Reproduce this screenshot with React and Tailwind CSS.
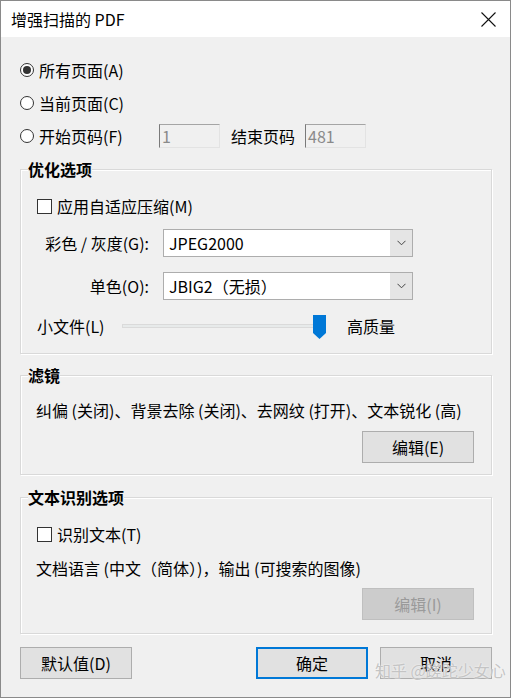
import React from 'react';

const font = { fontFamily: '"Noto Sans CJK SC", "Noto Sans", sans-serif' };

const Radio = ({ checked, label }) => (
  <div className="flex items-center">
    <div className="w-[14px] h-[14px] rounded-full border border-[#333] bg-white flex items-center justify-center">
      {checked && <div className="w-[8px] h-[8px] rounded-full bg-[#333]" />}
    </div>
    <span className="ml-[5px]">{label}</span>
  </div>
);

const Checkbox = ({ label }) => (
  <div className="flex items-center h-[24px]">
    <div className="w-[15px] h-[15px] border border-[#333] bg-white" />
    <span className="ml-[5px]">{label}</span>
  </div>
);

const PageInput = ({ value }) => (
  <div className="w-[61px] h-[24px] border border-t-[#a5a5a5] border-l-[#7a7a7a] border-r-[#e3e3e3] border-b-[#e3e3e3] bg-[#f0f0f0] text-[#8a8a8a] pl-[2px] flex items-center">
    {value}
  </div>
);

const Select = ({ value }) => (
  <div className="w-[250px] h-[28px] border border-[#adadad] bg-white flex">
    <div className="flex-1 flex items-center pl-[5px]">{value}</div>
    <div className="w-[22px] bg-[#e5e5e5] flex items-center justify-center">
      <svg width="9" height="6" viewBox="0 0 9 6">
        <path d="M0.5 0.8 L4.5 4.8 L8.5 0.8" fill="none" stroke="#444" strokeWidth="1" />
      </svg>
    </div>
  </div>
);

const Button = ({ children, disabled, primary }) => (
  <div
    className={`w-[112px] h-[32px] flex items-center justify-center ${
      primary
        ? 'border-2 border-[#0078d7] bg-[#e1e1e1]'
        : disabled
        ? 'border border-[#bfbfbf] bg-[#cccccc] text-[#9a9a9a]'
        : 'border border-[#adadad] bg-[#e1e1e1]'
    }`}
  >
    {children}
  </div>
);

const Group = ({ title, className, children }) => (
  <div className={`relative border border-[#d9d9d9] shadow-[1px_1px_0_#fff,inset_1px_1px_0_#fff] ${className}`}>
    <div className="absolute -top-[10px] left-[7px] bg-[#f0f0f0] font-bold leading-[18px]">{title}</div>
    {children}
  </div>
);

export default function App() {
  return (
    <div
      className="w-[511px] h-[698px] bg-[#f0f0f0] border border-[#8a8a8a] text-[16px] leading-[22px] text-black flex flex-col overflow-hidden"
      style={font}
    >
      {/* title bar */}
      <div className="h-[36px] bg-white flex items-center justify-between pl-[10px] pr-[14px] shrink-0">
        <span>增强扫描的 PDF</span>
        <svg width="15" height="15" viewBox="0 0 15 15">
          <path d="M0.5 0.5 L14.5 14.5 M14.5 0.5 L0.5 14.5" stroke="#111" strokeWidth="1.1" />
        </svg>
      </div>

      <div className="pl-[19px] pr-[18px] pt-[16px] flex flex-col">
        <div className="h-[33px] flex items-center">
          <Radio checked label="所有页面(A)" />
        </div>
        <div className="h-[33px] flex items-center">
          <Radio label="当前页面(C)" />
        </div>
        <div className="h-[33px] flex items-center">
          <div className="w-[139px]">
            <Radio label="开始页码(F)" />
          </div>
          <PageInput value="1" />
          <span className="ml-[11px] mr-[10px]">结束页码</span>
          <PageInput value="481" />
        </div>

        {/* 优化选项 */}
        <Group title="优化选项" className="mt-[17px] pl-[16px] pt-[24px] pb-[14px]">
          <Checkbox label="应用自适应压缩(M)" />
          <div className="flex items-center mt-[11px]">
            <div className="w-[126px] pr-[14px] text-right">彩色 / 灰度(G):</div>
            <Select value="JPEG2000" />
          </div>
          <div className="flex items-center mt-[15px]">
            <div className="w-[126px] pr-[14px] text-right">单色(O):</div>
            <Select value="JBIG2（无损）" />
          </div>
          <div className="flex items-center h-[26px] mt-[13px]">
            <div className="w-[85px]">小文件(L)</div>
            <div className="relative w-[204px] h-[26px] flex items-center">
              <div className="w-full h-[4px] bg-[#e7eaea] border border-[#dadada]" />
              <svg className="absolute left-[191px] top-[2px]" width="13" height="24" viewBox="0 0 13 24">
                <path d="M0 0 H13 V18 L6.5 24 L0 18 Z" fill="#0078d7" />
              </svg>
            </div>
            <div className="ml-[21px]">高质量</div>
          </div>
        </Group>

        {/* 滤镜 */}
        <Group title="滤镜" className="mt-[21px] pl-[15px] pr-[17px] pt-[23px] pb-[11px]">
          <div>纠偏 (关闭)、背景去除 (关闭)、去网纹 (打开)、文本锐化 (高)</div>
          <div className="flex justify-end mt-[10px]">
            <Button>编辑(E)</Button>
          </div>
        </Group>

        {/* 文本识别选项 */}
        <Group title="文本识别选项" className="mt-[22px] pl-[16px] pr-[17px] pt-[24px] pb-[13px]">
          <Checkbox label="识别文本(T)" />
          <div className="mt-[11px] -ml-[1px]">文档语言 (中文（简体）)，输出 (可搜索的图像)</div>
          <div className="flex justify-end mt-[9px]">
            <Button disabled>编辑(I)</Button>
          </div>
        </Group>

        <div className="relative flex items-center mt-[13px]">
          <Button>默认值(D)</Button>
          <div className="ml-auto flex gap-[12px]">
            <Button primary>确定</Button>
            <Button>取消</Button>
          </div>
          <div className="absolute left-[355px] top-[12px] whitespace-nowrap text-[16px] text-[#c4c4c4] [text-shadow:0_0_2px_#fff]">
            知乎 @蹉跎少女心
          </div>
        </div>
      </div>
    </div>
  );
}
